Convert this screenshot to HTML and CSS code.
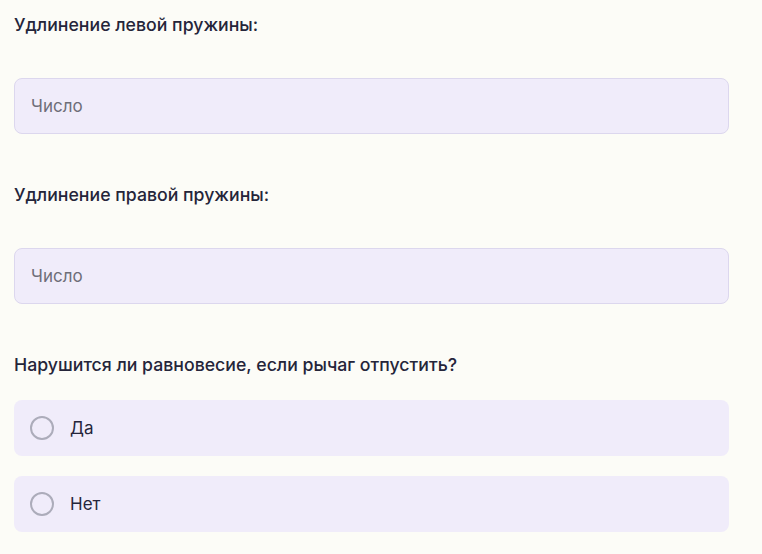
FILE: index.html
```html
<!DOCTYPE html>
<html>
<head>
  <title>Рычаг</title>
  <link rel="stylesheet" href="styles.css">
</head>
<body>
  <div class="form">
    <div class="field">
      <label class="label" for="left">Удлинение левой пружины:</label>
      <input class="input" id="left" type="text" placeholder="Число">
    </div>

    <div class="field">
      <label class="label" for="right">Удлинение правой пружины:</label>
      <input class="input" id="right" type="text" placeholder="Число">
    </div>

    <div class="field">
      <div class="label">Нарушится ли равновесие, если рычаг отпустить?</div>
      <div class="options">
        <label class="option"><span class="radio"></span>Да</label>
        <label class="option"><span class="radio"></span>Нет</label>
      </div>
    </div>
  </div>
</body>
</html>
```

FILE: styles.css
```css
body {
  margin: 0;
  background-color: #fcfcf7;
  font-family: Inter, Roboto, "Noto Sans", sans-serif;
  color: #25253a;
}

.form {
  padding: 13px 33px 0 14px;
}

.field {
  margin-bottom: 49px;
}

.label {
  display: block;
  font-size: 17.7px;
  font-weight: 500;
  line-height: 24px;
  margin-bottom: 41px;
}

.field:last-child .label {
  margin-bottom: 23px;
}

.input {
  display: block;
  box-sizing: border-box;
  width: 100%;
  height: 56px;
  padding: 0 16px;
  background-color: #f0ecfa;
  border: 1px solid #dcd7ee;
  border-radius: 8px;
  font-family: inherit;
  font-size: 17px;
  color: #25253a;
  outline: none;
}

.input::placeholder {
  color: #6e6e78;
}

.options {
  display: flex;
  flex-direction: column;
  gap: 20px;
}

.option {
  display: flex;
  align-items: center;
  height: 56px;
  padding: 0 16px;
  background-color: #f0ecfa;
  border-radius: 8px;
  font-size: 17px;
  cursor: pointer;
}

.radio {
  width: 24px;
  height: 24px;
  box-sizing: border-box;
  border: 2px solid #acacba;
  border-radius: 50%;
  margin-right: 16px;
}
```
